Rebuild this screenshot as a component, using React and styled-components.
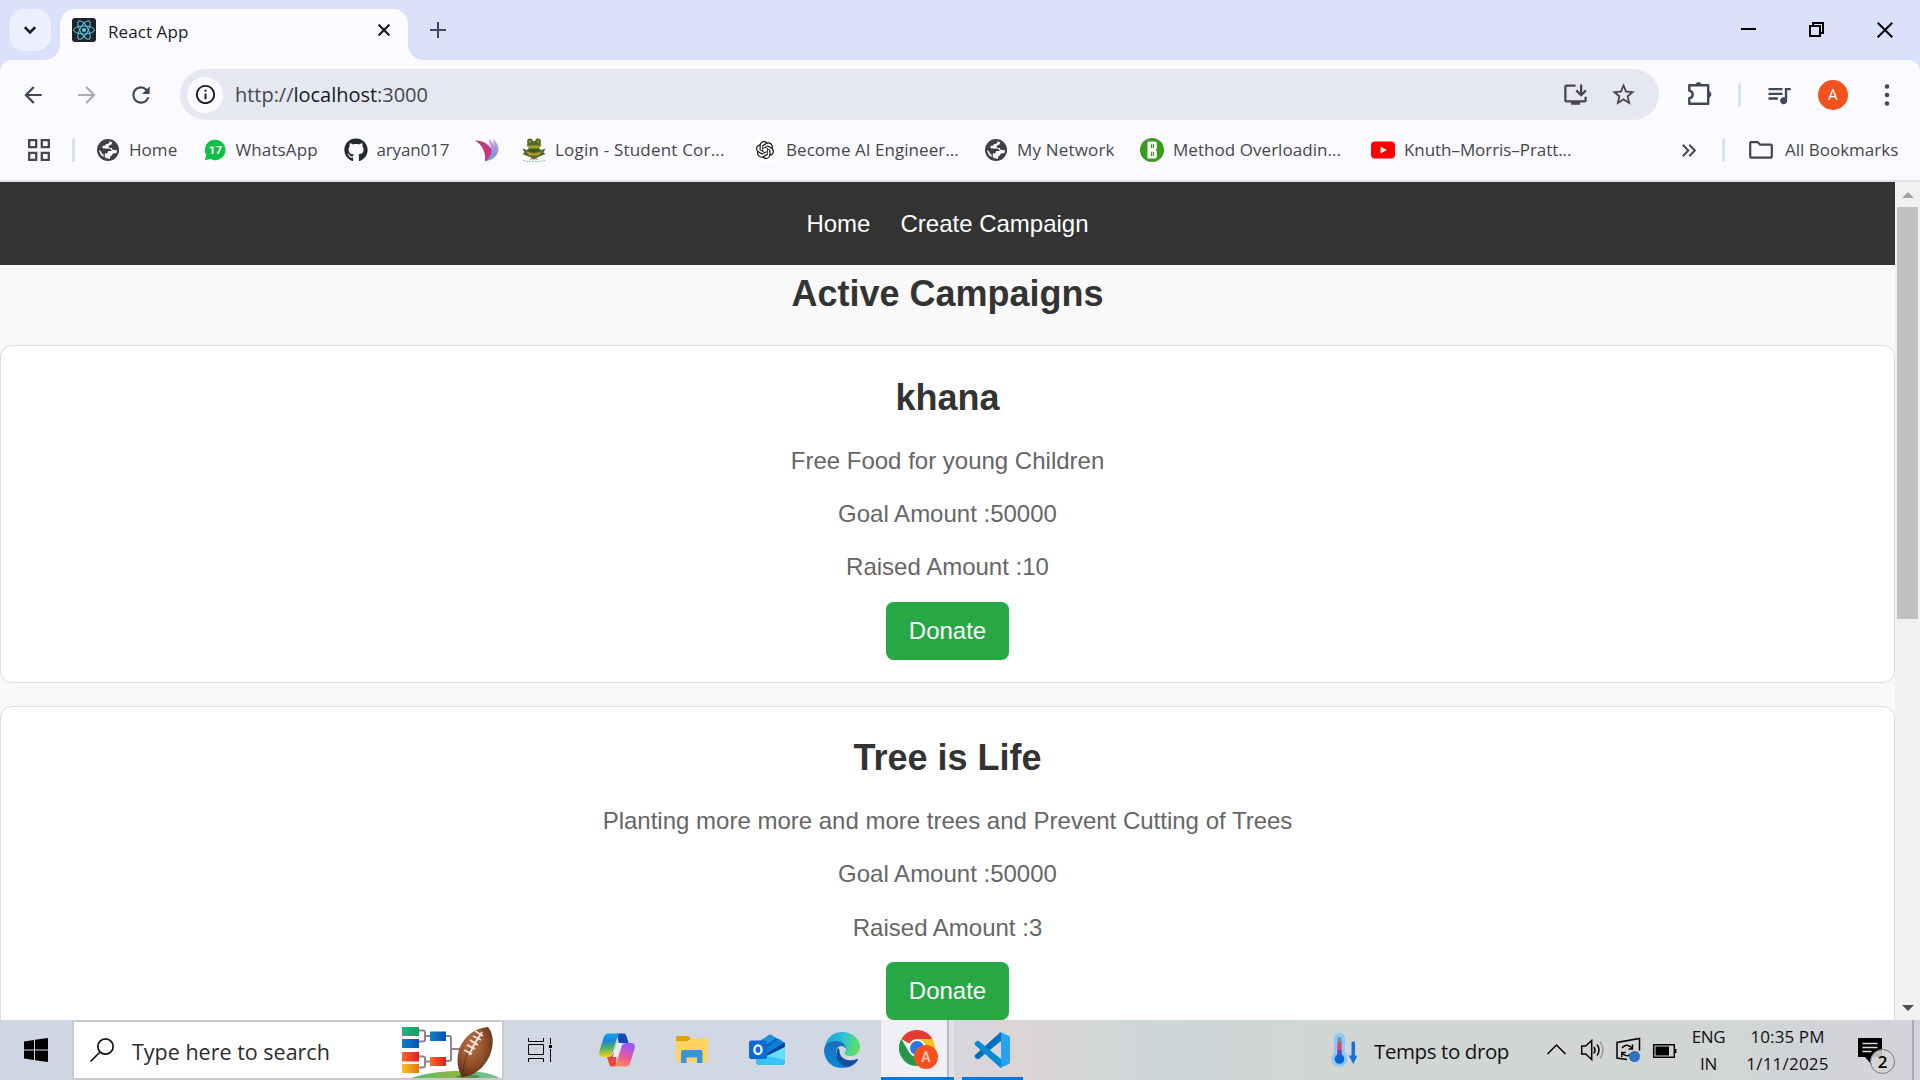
import React from "react";
import styled, { createGlobalStyle } from "styled-components";
import { FaGithub } from "react-icons/fa";
import { SiOpenai } from "react-icons/si";
import {
  MdArrowBack,
  MdArrowForward,
  MdRefresh,
  MdInfoOutline,
  MdStarBorder,
  MdQueueMusic,
  MdOutlineInstallDesktop,
} from "react-icons/md";

const GlobalStyle = createGlobalStyle`
  * { box-sizing: border-box; margin: 0; padding: 0; }
  html, body { overflow: hidden; background: #f9f9f9; }
  svg { display: block; flex: none; }
`;

const uiFont = `"Segoe UI", "Open Sans", "Noto Sans", sans-serif`;

const Screen = styled.div`
  width: 1920px;
  height: 1080px;
  display: flex;
  flex-direction: column;
  overflow: hidden;
  font-family: ${uiFont};
`;

const Label = styled.span`
  font-size: ${(p) => p.$size || 17}px;
  letter-spacing: ${(p) => p.$track || 0}px;
  color: ${(p) => p.$color || "#45474b"};
  line-height: 24px;
  white-space: pre;
`;

/* ---------- tab strip ---------- */
const TabStrip = styled.div`
  height: 60px;
  flex: none;
  display: flex;
  align-items: flex-end;
  padding-left: 9px;
  background: #dae1fa;
`;

const TabSearch = styled.div`
  width: 42px;
  height: 42px;
  margin: 0 9px 9px 0;
  border-radius: 15px;
  background: #ecf0fe;
  display: flex;
  align-items: center;
  justify-content: center;
`;

const Tab = styled.div`
  position: relative;
  width: 348px;
  height: 51px;
  padding: 0 18px 9px 12px;
  border-radius: 15px 15px 0 0;
  background: #fafaff;
  display: flex;
  align-items: center;
  gap: 12px;
  &::before,
  &::after {
    content: "";
    position: absolute;
    bottom: 0;
    width: 15px;
    height: 15px;
  }
  &::before {
    left: -15px;
    background: radial-gradient(circle at 0 0, transparent 14.5px, #fafaff 15px);
  }
  &::after {
    right: -15px;
    background: radial-gradient(circle at 100% 0, transparent 14.5px, #fafaff 15px);
  }
`;

const TabTitle = styled(Label)`
  flex: 1;
  padding-top: 3px;
`;

const NewTab = styled.div`
  width: 60px;
  height: 60px;
  display: flex;
  align-items: center;
  justify-content: center;
`;

const WindowControls = styled.div`
  margin-left: auto;
  height: 60px;
  display: flex;
  align-items: center;
  gap: 53px;
  padding-right: 27px;
`;

/* ---------- toolbar ---------- */
const ToolbarBack = styled.div`
  height: 122px;
  flex: none;
  background: #dae1fa;
`;

const ToolbarPanel = styled.div`
  height: 122px;
  border-radius: 12px 12px 0 0;
  border-bottom: 2px solid #e0e2ec;
  background: #fafaff;
`;

const Toolbar = styled.div`
  height: 69px;
  padding: 0 27px 0 20px;
  display: flex;
  align-items: center;
`;

const NavIcons = styled.div`
  width: 160px;
  display: flex;
  align-items: center;
  gap: 28px;
  padding-top: 1px;
  color: #3f4759;
`;

const Omnibox = styled.div`
  width: 1479px;
  height: 51px;
  padding: 0 22px 0 7px;
  border-radius: 26px;
  background: #e5e8f3;
  display: flex;
  align-items: center;
`;

const SiteInfo = styled.div`
  width: 36px;
  height: 36px;
  margin-right: 12px;
  border-radius: 50%;
  background: #fafaff;
  color: #1b1c20;
  display: flex;
  align-items: center;
  justify-content: center;
`;

const Url = styled(Label)`
  flex: 1;
  b {
    font-weight: 400;
    color: #17181c;
  }
`;

const OmniboxActions = styled.div`
  display: flex;
  align-items: center;
  gap: 21px;
  color: #45474b;
`;

const ToolbarActions = styled.div`
  flex: 1;
  display: flex;
  align-items: center;
  color: #3f4759;
  padding-left: 29px;
`;

const Divider = styled.div`
  width: 3px;
  height: 24px;
  flex: none;
  margin: 0 ${(p) => p.$gap || 0}px;
  border-radius: 2px;
  background: #d3e3fd;
`;

const Avatar = styled.div`
  width: 30px;
  height: 30px;
  margin-left: 25px;
  margin-right: 36px;
  border-radius: 50%;
  background: #f4511e;
  color: #fff;
  font: 400 15px/30px Roboto, sans-serif;
  text-align: center;
`;

/* ---------- bookmarks ---------- */
const BookmarksBar = styled.div`
  height: 42px;
  display: flex;
  align-items: center;
`;

const Bookmark = styled.div`
  width: ${(p) => p.$w}px;
  flex: none;
  display: flex;
  align-items: center;
`;

const IconSlot = styled.div`
  width: ${(p) => p.$w || 32}px;
  flex: none;
`;

const OpenAiTile = styled.div`
  width: 24px;
  height: 24px;
  border-radius: 6px;
  background: #fff;
  color: #111;
  display: flex;
  align-items: center;
  justify-content: center;
`;

/* ---------- page ---------- */
const Viewport = styled.div`
  height: 838px;
  flex: none;
  display: flex;
  overflow: hidden;
  background: #f9f9f9;
  font-family: Arial, "Liberation Sans", sans-serif;
`;

const Page = styled.div`
  width: 1895px;
  text-align: center;
  line-height: 1.6;
`;

const SiteNav = styled.nav`
  height: 83px;
  display: flex;
  align-items: center;
  justify-content: center;
  gap: 30px;
  background: #333;
  color: #fff;
  font-size: 24px;
  line-height: 27px;
`;

const Heading = styled.h2`
  font-size: 36px;
  line-height: 57.6px;
  color: #333;
  margin-bottom: ${(p) => p.$gap}px;
`;

const Card = styled.section`
  height: 337.9px;
  margin-bottom: 22.6px;
  padding: 22.5px;
  border: 1px solid #ddd;
  border-radius: 12px;
  background: #fff;
  display: flex;
  flex-direction: column;
  align-items: center;
`;

const Detail = styled.p`
  font-size: 24px;
  line-height: 38.4px;
  margin-bottom: 15px;
  color: #666;
`;

const Donate = styled.button`
  width: 123px;
  height: 58px;
  flex: none;
  padding-bottom: 1px;
  border: 0;
  border-radius: 7.5px;
  background: #28a745;
  color: #fff;
  font: 24px/27px Arial, "Liberation Sans", sans-serif;
`;

const Scrollbar = styled.div`
  width: 25px;
  padding: 10px 2px 9px;
  background: #f1f1f1;
  display: flex;
  flex-direction: column;
  align-items: center;
`;

const Thumb = styled.div`
  width: 21px;
  height: 412px;
  margin: 9px 0 auto;
  background: #c1c1c1;
`;

/* ---------- taskbar ---------- */
const Taskbar = styled.div`
  height: 60px;
  flex: none;
  display: flex;
  background: linear-gradient(90deg, #d0d7e4 0, #d1d8e3 860px, #d7d6dc 960px, #dbd5d5 1025px, #d2d6d7 1100px, #cfd6d7 1160px, #d1d6d5 1330px, #d1d6d5 1700px, #d2d3da 1920px);
`;

const TaskButton = styled.div`
  width: ${(p) => p.$w}px;
  height: 60px;
  flex: none;
  display: flex;
  align-items: center;
  justify-content: center;
`;

const SearchBox = styled.div`
  width: 432px;
  height: 60px;
  flex: none;
  padding-left: 15px;
  border: 2px solid #cacaca;
  background: #fff;
  display: flex;
  align-items: center;
`;

const SearchText = styled(Label)`
  width: 270px;
  margin-left: 17px;
  padding-top: 4px;
`;

const ActiveTask = styled.div`
  width: 73px;
  height: 60px;
  flex: none;
  margin-left: 5px;
  padding: 3px 0 0 18px;
  background: linear-gradient(90deg, #eff0f3 66px, #b7b9c0 66px, #b7b9c0 68px, #e0e2e8 68px);
  border-bottom: 3px solid #0078d7;
  display: flex;
  align-items: center;
`;

const OpenTask = styled.div`
  width: 61px;
  height: 60px;
  margin-left: 8px;
  padding: 3px 2px 0 0;
  flex: none;
  border-bottom: 3px solid #0078d7;
  display: flex;
  align-items: center;
  justify-content: center;
`;

const Weather = styled.div`
  width: 216px;
  margin-left: auto;
  display: flex;
  align-items: center;
  gap: 17px;
`;

const WeatherText = styled(Label)`
  padding-top: 2px;
`;

const Tray = styled.div`
  width: 142px;
  display: flex;
  align-items: center;
`;

const TwoLine = styled.div`
  width: ${(p) => p.$w}px;
  display: flex;
  flex-direction: column;
  align-items: center;
  justify-content: center;
  gap: 3px;
  padding-top: 1px;
`;

const Notifications = styled.div`
  position: relative;
  width: 65px;
  padding: 18px 0 0 11px;
`;

const Count = styled.div`
  position: absolute;
  left: 23px;
  top: 29px;
  width: 25px;
  height: 25px;
  border: 1px solid #777;
  border-radius: 50%;
  background: rgba(214, 214, 216, 0.88);
  color: #000;
  font: 600 17px/23px ${uiFont};
  text-align: center;
`;

const ShowDesktop = styled.div`
  width: 8px;
  border-left: 2px solid #a9abb1;
`;

/* ---------- drawings ---------- */
const ReactIcon = () => (
  <svg width="24" height="24" viewBox="0 0 24 24">
    <rect width="24" height="24" rx="3" fill="#20232a" />
    <g fill="none" stroke="#5ccfee" strokeWidth="1">
      <ellipse cx="12" cy="12" rx="10.4" ry="4" />
      <ellipse cx="12" cy="12" rx="10.4" ry="4" transform="rotate(60 12 12)" />
      <ellipse cx="12" cy="12" rx="10.4" ry="4" transform="rotate(120 12 12)" />
    </g>
    <circle cx="12" cy="12" r="2" fill="#5ccfee" />
  </svg>
);

const Globe = () => (
  <svg width="22" height="22" viewBox="0 0 22 22">
    <circle cx="11" cy="11" r="11" fill="#3f4245" />
    <path d="M12.500 2.300c.3 1.700-.8 2.700-2.900 2.800-.9 0-1.400.8-1.400 1.700H6.600c-.8 0-1.200.6-1.200 1.300 0 .8.500 1.300 1.300 1.300h4.800c2 0 3 1 3.200 2.600h-3.400c-.3 1.700-1 2.600-2.700 2.600H7.800v3.900a8.800 8.800 0 0 0 5.400 1.100c-.5-1.500.2-3 1.800-3.200.2-1.400.8-2.200 2.200-2.200h2.200a8.800 8.800 0 0 0 .3-3.200h-2.500c-1.400 0-2.200-.8-2.300-2.100h-1.700c-1 0-1.500-.6-1.500-1.400 0-.9.500-1.400 1.400-1.500 1.300-.1 2-.9 2.100-2.500a8.500 8.500 0 0 0-2.700-1.200ZM2.200 10.800a8.800 8.800 0 0 0 4.400 7.300v-2.700c-1.500-.2-2.200-1.100-2.300-2.600Z" fill="#fafaff" />
  </svg>
);

const WhatsApp = () => (
  <svg width="22" height="22" viewBox="0 0 22 22">
    <path d="M11.300 .8A10.200 10.200 0 1 1 6.500 20L.8 21.300l1.500-5.200A10.200 10.200 0 0 1 11.300.8Z" fill="#0fc143" />
    <text x="11.400" y="15.300" textAnchor="middle" fontFamily="Roboto, sans-serif" fontSize="11.500" fontWeight="700" fill="#fff">17</text>
  </svg>
);

const Swoosh = () => (
  <svg width="24" height="26" viewBox="0 0 24 26">
    <defs>
      <linearGradient id="sw1" x1="0" y1="0" x2="1" y2="1">
        <stop offset="0" stopColor="#a9417f" />
        <stop offset="1" stopColor="#d7307c" />
      </linearGradient>
      <linearGradient id="sw2" x1="0" y1="0" x2="0" y2="1">
        <stop offset="0" stopColor="#d9a3dc" />
        <stop offset="1" stopColor="#5f8fdc" />
      </linearGradient>
    </defs>
    <path d="M13.500 2c3 2 5 4 6 7l-1.500-7.500c4 4 6 8 5.500 12C22.500 18.500 18 23 9.500 24.500 13.500 20 16 16 16 11.500Z" fill="url(#sw2)" />
    <path d="M0 3.500c6 0 12 2 16 8 1.500 4-1 9-6 13 1-9-2.500-16.500-10-21Z" fill="url(#sw1)" />
  </svg>
);

const Frog = () => (
  <svg width="24" height="25" viewBox="0 0 24 25">
    <g fill="#4f6b25">
      <circle cx="8" cy="3.500" r="2.900" />
      <circle cx="16" cy="3.500" r="2.900" />
      <ellipse cx="12" cy="7" rx="7" ry="4" />
      <path d="M.5 10.500 5 12l2-2h10l2 2 4.500-1.500-2 4 2 1.500-6 2.500-5.500 2.500L6.500 18.500.5 16l2-1.500Z" />
    </g>
    <path d="M5.500 7.500h13l-2.500 2.700H8ZM4 13.500l8 2 8-2-3.500 4H7.500Z" fill="#b3992a" />
    <path d="M7.500 12h9v1.300h-9Z" fill="#334716" />
    <circle cx="8" cy="3.400" r="1" fill="#b9a83a" />
    <circle cx="16" cy="3.400" r="1" fill="#b9a83a" />
    <path d="M12 18v4M8.500 21.500l3.500-2 3.500 2" stroke="#8b5b34" fill="none" />
    <path d="M1 22.500l5 1 5-.3 6 .6 6-1.500" stroke="#9fbf9f" strokeDasharray="2 1" fill="none" />
  </svg>
);

const GreenB = () => (
  <svg width="24" height="24" viewBox="0 0 24 24">
    <circle cx="12" cy="12" r="12" fill="#3a9a1d" />
    <path d="M7.500 3.500h7.300c1.300 0 2 .8 2 2v4.400c0 1-.5 1.700-1.300 2 .8.300 1.300 1 1.300 2v4.700c0 1.200-.7 2-2 2H7.500Z" fill="#fff" />
    <path d="M11.500 6.300v3.800M11.500 13.700v4.200M13.400 6.300v3.800M13.400 13.700v4.200" stroke="#3a9a1d" strokeWidth="1.200" />
  </svg>
);

const YouTube = () => (
  <svg width="24" height="18" viewBox="0 0 24 18">
    <rect y=".5" width="24" height="17" rx="4" fill="#f00" />
    <path d="M9.600 5.400v7.200L15.800 9Z" fill="#fff" />
  </svg>
);

const Apps = () => (
  <svg width="22" height="22" viewBox="0 0 22 22" fill="none" stroke="#45474b" strokeWidth="2.300">
    <path d="M1.200 1.200h7v7h-7ZM13.800 1.200h7v7h-7ZM1.200 13.800h7v7h-7ZM13.800 13.800h7v7h-7Z" />
  </svg>
);

const Puzzle = () => (
  <svg width="25" height="26" viewBox="0 0 25 26" fill="none" stroke="#3f4759" strokeWidth="2.400" strokeLinejoin="round">
    <path d="M1.300 3.300h18.900v18.400H1.300v-5.500c2.300-.6 3.400-2 3.400-3.800 0-1.800-1.100-3.100-3.400-3.700Z" />
    <path d="M7.700 2.500a3 3 0 0 1 5.600 0ZM21 9.600a3 3 0 0 1 0 5.600Z" fill="#3f4759" strokeWidth="1" />
  </svg>
);

const StartLogo = () => (
  <svg width="24" height="24" viewBox="0 0 24 24">
    <path d="M0 3.400 10 2v9.500H0ZM11 1.800 24 0v11.500H11ZM0 12.500h10V22L0 20.600ZM11 12.500h13V24l-13-1.800Z" />
  </svg>
);

const Football = () => (
  <svg width="100" height="56" viewBox="402 1022 100 56">
    <defs>
      <radialGradient id="ball" cx=".4" cy=".35" r=".7">
        <stop offset="0" stopColor="#bb7243" />
        <stop offset=".55" stopColor="#93512a" />
        <stop offset="1" stopColor="#592a18" />
      </radialGradient>
      <linearGradient id="hill">
        <stop offset="0" stopColor="#55b97e" />
        <stop offset=".5" stopColor="#8bb944" />
        <stop offset=".7" stopColor="#6fbe83" />
        <stop offset="1" stopColor="#74c48f" />
      </linearGradient>
      <linearGradient id="fb1"><stop stopColor="#12b886" /><stop offset="1" stopColor="#14a35b" /></linearGradient>
      <linearGradient id="fb2"><stop stopColor="#0a84c6" /><stop offset="1" stopColor="#0a50b8" /></linearGradient>
      <linearGradient id="fb3"><stop stopColor="#fa6b28" /><stop offset="1" stopColor="#e51b23" /></linearGradient>
      <linearGradient id="fb4"><stop stopColor="#fbbf24" /><stop offset="1" stopColor="#e07b10" /></linearGradient>
    </defs>
    <path d="M408 1079c14-5 32-8 52-8 18 0 34 2 41 8Z" fill="url(#hill)" />
    <g fill="none" stroke="#8f8299" strokeWidth="2">
      <path d="M419 1030.500h4q2 0 2 2v7q0 2-2 2h-4M425 1036h6M419 1056.500h4q2 0 2 2v7q0 2-2 2h-4M425 1061.500h6M446 1036h3q2 0 2 2v21q0 2-2 2h-3M451 1049h9" />
    </g>
    <rect x="402" y="1027" width="17" height="9" fill="url(#fb1)" />
    <rect x="402" y="1039" width="17" height="9" fill="url(#fb2)" />
    <rect x="402" y="1052" width="17" height="9.500" fill="url(#fb3)" />
    <rect x="402" y="1064" width="17" height="9" fill="url(#fb4)" />
    <rect x="430" y="1031.500" width="16" height="9.500" fill="url(#fb2)" />
    <rect x="430" y="1057" width="16" height="9" fill="url(#fb3)" />
    <ellipse cx="468" cy="1076.500" rx="12" ry="2" fill="#4e6f2c" opacity=".6" />
    <path d="M488 1027c5 6 6 15 3 25-4 13-15 24-29 25-5-8-6-20-2-30 5-11 15-19 28-20Z" fill="url(#ball)" />
    <path d="M463 1076c0-10 3-20 7-28" stroke="#5b2c19" strokeWidth=".8" fill="none" />
    <path d="M482 1032c-5 7-9 14-13 23M475 1031l8 5M473 1036l8 4M470 1040l8 5M467 1045l8 4M464 1050l8 4" stroke="#f3e9e2" strokeWidth="1.900" fill="none" />
  </svg>
);

const TaskView = () => (
  <svg width="24" height="24" viewBox="0 0 24 24" fill="none" stroke="#000" strokeWidth="1">
    <path d="M.5 0v3.500h15V0M.5 6.500h15v10H.5ZM.5 24v-3.500h15V24M22.500 0v6M22.500 11v13" />
    <rect x="21" y="7" width="3" height="3" fill="#000" stroke="none" />
  </svg>
);

const Copilot = () => (
  <svg width="36" height="34" viewBox="0 0 36 34">
    <defs>
      <linearGradient id="cp1" x1="0" y1="0" x2=".1" y2="1">
        <stop offset="0" stopColor="#11a4ea" />
        <stop offset=".35" stopColor="#1785dd" />
        <stop offset=".65" stopColor="#58ae62" />
        <stop offset="1" stopColor="#efd312" />
      </linearGradient>
      <linearGradient id="cp2" x1=".3" y1="0" x2="0" y2="1">
        <stop offset="0" stopColor="#9a58f0" />
        <stop offset=".5" stopColor="#ee5795" />
        <stop offset="1" stopColor="#ff9a52" />
      </linearGradient>
    </defs>
    <path d="M18 .5h6.500c1.500 0 2.300.8 2.800 2.300l2.400 7.200h-4c-3 0-4.200 1-5.200 4Z" fill="#1847b5" />
    <path d="M9 .5h13c-3 1-4 4-5 8l-3.500 11c-1 3-2.700 4.500-5.500 4.500H4c-3.500 0-4.500-2.200-3.500-6L4.500 5c1-3 2-4.500 4.500-4.500Z" fill="url(#cp1)" />
    <path d="M17 33.500h-4c-1.500 0-2.200-.8-2.700-2.300L8 24c4-.1 5.500-1.500 6.500-4.500l3 5Z" fill="#e8453c" />
    <path d="M18.500 10h5l-5.500 14h-4.500Z" fill="#e9ecf4" />
    <path d="M27 33.500H14c3-1 4-4 5-8l3.300-11c.9-3 2.700-4.500 5.700-4.500h4.300c3 0 4.200 2 3.300 5.500L31.500 29c-1 3-2 4.500-4.500 4.500Z" fill="url(#cp2)" />
  </svg>
);

const Explorer = () => (
  <svg width="32" height="28" viewBox="0 0 32 28">
    <path d="M0 2Q0 0 2 0h10l3 3-2 3H0Z" fill="#e0a008" />
    <path d="M0 5h12l3-2.500h15q2 0 2 2V24q0 2-2 2H2q-2 0-2-2Z" fill="#fed35f" />
    <path d="M5 27V16.500Q5 14 7.500 14h16.500q2.500 0 2.500 2.500V27H21v-5.500H10.500V27Z" fill="#3a94dc" />
  </svg>
);

const Outlook = () => (
  <svg width="36" height="32" viewBox="0 0 36 32">
    <path d="M7 10 21 0.500 36 9v18q0 4-4 4H11q-4 0-4-4Z" fill="#0a63be" />
    <path d="M9 8 21 .5 27 4 12 15Z" fill="#1e90df" />
    <path d="m15 15 15-10 5 3.500L18 20Z" fill="#0a7fdc" />
    <path d="m18 19.500 17.500-11V15L22 22Z" fill="#073e91" />
    <path d="M36 13v14q0 4-4 4H11q-4 0-4-4v-3l11-2Z" fill="#37c6f4" />
    <path d="M36 13v13L18 22Z" fill="#68dff8" />
    <rect y="6.500" width="18" height="18.500" rx="2" fill="#0c6bd0" />
    <ellipse cx="9" cy="15.700" rx="3.600" ry="4.300" fill="none" stroke="#fff" strokeWidth="2.300" />
  </svg>
);

const Edge = () => (
  <svg width="36" height="36" viewBox="0 0 36 36">
    <defs>
      <linearGradient id="ed1" x1="0" y1=".3" x2="1" y2=".5">
        <stop offset="0" stopColor="#1a9fe0" />
        <stop offset=".5" stopColor="#2fc2d7" />
        <stop offset="1" stopColor="#62e158" />
      </linearGradient>
      <linearGradient id="ed2" x1="0" y1="0" x2="0" y2="1">
        <stop offset="0" stopColor="#1c6fb5" />
        <stop offset="1" stopColor="#0a87dc" />
      </linearGradient>
    </defs>
    <path d="M1 14C3 5.500 9.500 0 18 0c10.500 0 18 7 18 15 0 5-3.500 9-9 9-4 0-6.500-1.500-6.500-3 0-1 1.500-1.500 1.500-4 0-3.500-4-7-9.500-7C7 10 3 11.500 1 14Z" fill="url(#ed1)" />
    <path d="M0 18C.5 12 5.500 9 12 9c6 0 10 3.500 10 8-1-2-3-3-4.500-3-4 0-6 4-5 9 1 6 5.500 11 11 12-14 4-23.500-6-23.500-17Z" fill="url(#ed2)" />
    <path d="M14 15.500c-4 8-.5 17 8.500 20 5-1 9-3.500 11.500-7.500.5-1-.3-1.300-1-1-8 3.500-18 0-17.500-9Z" fill="#10509f" />
  </svg>
);

const Chrome = () => (
  <svg width="40" height="40" viewBox="0 0 40 40">
    <path d="M18 18 2.400 9A18 18 0 0 1 33.600 9H18Z" fill="#e33b2e" />
    <path d="M18 18V9h15.600A18 18 0 0 1 18 36l8-13.500Z" fill="#fcc31e" />
    <path d="M18 18l-7.800 4.500L2.400 9A18 18 0 0 0 18 36l7.800-13.500Z" fill="#259746" />
    <circle cx="18" cy="18" r="9" fill="#fff" />
    <circle cx="18" cy="18" r="7" fill="#2d72e8" />
    <circle cx="27" cy="27" r="12" fill="#f4511e" />
    <text x="27" y="32" textAnchor="middle" fontFamily="Roboto, sans-serif" fontSize="14" fontWeight="500" fill="#ffd0bf">A</text>
  </svg>
);

const VsCode = () => (
  <svg width="36" height="36" viewBox="0 0 36 36">
    <path d="M1 25.500 3 27q1 .6 2-.2L27 9V.5q-1 0-2 1L1 23q-1 1.300 0 2.500Z" fill="#0170b8" />
    <path d="M1 10.500 3 9q1-.6 2 .2L27 27v8.500q-1 0-2-1L1 13Q0 11.700 1 10.500Z" fill="#058bd6" />
    <path d="M26.500 0 35 4q1 .5 1 1.700v24.600q0 1.200-1 1.700l-8.500 4q-1 0-1.500-.7 2 .2 2-1.800V2.500q0-2-2-1.800.5-.7 1.500-.7Z" fill="#26a3f1" />
  </svg>
);

const Thermometer = () => (
  <svg width="26" height="38" viewBox="0 0 26 38">
    <path d="M3 7.500a5.500 5.500 0 0 1 11 0V22a8 8 0 1 1-11 0Z" fill="#8cc8fa" />
    <rect x="6.500" y="6" width="4" height="20" rx="2" fill="#7590aa" />
    <rect x="6.500" y="11" width="4" height="17" fill="#d8466e" />
    <rect x="6.500" y="19" width="4" height="9" fill="#5054c0" />
    <circle cx="8.500" cy="28" r="4.800" fill="#0b63d8" />
    <path d="M20.500 12q0-1.700 1.700-1.700T24 12v12.500h2.500L22.200 33l-4.500-8.500h2.800Z" fill="#1273dc" />
  </svg>
);

const TrayIcons = () => (
  <svg width="130" height="30" viewBox="1547 1035 130 30" fill="none" stroke="#000" strokeWidth="1.500">
    <path d="m1547.500 1054 9-9 9 9" />
    <path d="M1581.700 1046h4l6-5.500v19l-6-5.500h-4ZM1594 1047q2 3 0 6.500M1597 1044.500q4 5.500 0 11" />
    <path d="M1600 1041.500q6 8 0 17" stroke="#999" />
    <path d="M1627 1059.500l-10-1.500v-15.500l22.500-4v12" />
    <path d="M1622 1048q4-5 9-1l1.500 1.500m0-4v4.500h-4M1632 1053q-4 5-9 1l-1.200-1.500m0 4.500v-4.500h4" />
    <circle cx="1634.500" cy="1056.500" r="5.500" fill="#2c72bf" stroke="none" />
    <path d="M1653.700 1044.700h20.600v12.600h-20.600ZM1675.700 1049v4" />
    <rect x="1655.500" y="1046.500" width="13.500" height="9" fill="#000" stroke="none" />
  </svg>
);

const bookmarks = [
  { icon: <Globe />, text: "Home", w: 107, track: 0.05 },
  { icon: <WhatsApp />, text: "WhatsApp", w: 140, slot: 31.5, track: 0.12 },
  { icon: <FaGithub size={24} color="#24292f" />, text: "aryan017", w: 131, slot: 32.5, track: -0.15 },
  { icon: <Swoosh />, text: "", w: 47 },
  { icon: <Frog />, text: "Login - Student Cor...", w: 231, slot: 33, track: 0.2 },
  { icon: <OpenAiTile><SiOpenai size={18} /></OpenAiTile>, text: "Become AI Engineer...", w: 232, slot: 33, track: 0.05 },
  { icon: <Globe />, text: "My Network", w: 155, track: 0.18 },
  { icon: <GreenB />, text: "Method Overloadin...", w: 231, slot: 33, track: 0.05 },
  { icon: <YouTube />, text: "Knuth–Morris–Pratt...", w: 311, slot: 33, track: -0.06 },
];

const campaigns = [
  { title: "khana", text: "Free Food for young Children", goal: 50000, raised: 10 },
  { title: "Tree is Life", text: "Planting more more and more trees and Prevent Cutting of Trees", goal: 50000, raised: 3 },
];

export default function App() {
  return (
    <Screen>
      <GlobalStyle />
      <TabStrip>
        <TabSearch>
          <svg width="12" height="8" viewBox="0 0 12 8" fill="none" stroke="#1b1c20" strokeWidth="2.600">
            <path d="m.8 1.200 5.200 5.200 5.200-5.200" />
          </svg>
        </TabSearch>
        <Tab>
          <ReactIcon />
          <TabTitle $track={0.08} $color="#1f2024">React App</TabTitle>
          <svg width="12" height="12" viewBox="0 0 12 12" stroke="#1b1c20" strokeWidth="2.200">
            <path d="m.6.6 10.800 10.800M11.400.6.6 11.400" />
          </svg>
        </Tab>
        <NewTab>
          <svg width="16" height="16" viewBox="0 0 16 16" stroke="#3f4759" strokeWidth="2">
            <path d="M8 0v16M0 8h16" />
          </svg>
        </NewTab>
        <WindowControls>
          <svg width="15" height="16" viewBox="0 0 15 16"><path d="M0 6h15v2H0Z" /></svg>
          <svg width="15" height="16" viewBox="0 0 15 16" fill="none" stroke="#000" strokeWidth="2">
            <path d="M1 4h10v10H1ZM4 4V1h10v10h-3" />
          </svg>
          <svg width="16" height="16" viewBox="0 0 16 16" stroke="#000" strokeWidth="2">
            <path d="m.7.700 14.600 14.600M15.300.700.700 15.300" />
          </svg>
        </WindowControls>
      </TabStrip>

      <ToolbarBack>
        <ToolbarPanel>
          <Toolbar>
            <NavIcons>
              <MdArrowBack size={26} />
              <MdArrowForward size={26} color="#a9abb1" />
              <MdRefresh size={26} />
            </NavIcons>
            <Omnibox>
              <SiteInfo><MdInfoOutline size={23} /></SiteInfo>
              <Url $size={20} $track={-0.03}>http://<b>localhost</b>:3000</Url>
              <OmniboxActions>
                <MdOutlineInstallDesktop size={27} />
                <MdStarBorder size={27} />
              </OmniboxActions>
            </Omnibox>
            <ToolbarActions>
              <Puzzle />
              <Divider $gap={24.5} />
              <MdQueueMusic size={28} />
              <Avatar>A</Avatar>
              <svg width="6" height="22" viewBox="0 0 6 22" fill="#3f4759">
                <circle cx="3" cy="2.500" r="2.300" />
                <circle cx="3" cy="11" r="2.300" />
                <circle cx="3" cy="19.500" r="2.300" />
              </svg>
            </ToolbarActions>
          </Toolbar>
          <BookmarksBar>
            <IconSlot $w={28} />
            <IconSlot $w={44}><Apps /></IconSlot>
            <Divider />
            <IconSlot $w={22} />
            {bookmarks.map((b, i) => (
              <Bookmark key={i} $w={b.w}>
                <IconSlot $w={b.slot}>{b.icon}</IconSlot>
                <Label $track={b.track}>{b.text}</Label>
              </Bookmark>
            ))}
            <IconSlot $w={40}>
              <svg width="14" height="13" viewBox="0 0 14 13" fill="none" stroke="#45474b" strokeWidth="2">
                <path d="M.8.800 6.300 6.500.8 12.200M7.300.800l5.500 5.700-5.500 5.700" />
              </svg>
            </IconSlot>
            <Divider />
            <IconSlot $w={24} />
            <IconSlot $w={36}>
              <svg width="24" height="18" viewBox="0 0 24 18" fill="none" stroke="#45474b" strokeWidth="2.200" strokeLinejoin="round">
                <path d="M1.200 2.200q0-1 1-1h6.600l2.400 2.500h10.600q1 0 1 1v11q0 1-1 1H2.200q-1 0-1-1Z" />
              </svg>
            </IconSlot>
            <Label>All Bookmarks</Label>
          </BookmarksBar>
        </ToolbarPanel>
      </ToolbarBack>

      <Viewport>
        <Page>
          <SiteNav>
            <span>Home</span>
            <span>Create Campaign</span>
          </SiteNav>
          <Heading $gap={22.5}>Active Campaigns</Heading>
          {campaigns.map((c) => (
            <Card key={c.title}>
              <Heading $gap={15.38}>{c.title}</Heading>
              <Detail>{c.text}</Detail>
              <Detail>Goal Amount :{c.goal}</Detail>
              <Detail>Raised Amount :{c.raised}</Detail>
              <Donate>Donate</Donate>
            </Card>
          ))}
        </Page>
        <Scrollbar>
          <svg width="12" height="6" viewBox="0 0 12 6"><path d="M0 6 6 0l6 6Z" fill="#a3a3a3" /></svg>
          <Thumb />
          <svg width="12" height="6" viewBox="0 0 12 6"><path d="M0 0h12L6 6Z" fill="#505050" /></svg>
        </Scrollbar>
      </Viewport>

      <Taskbar>
        <TaskButton $w={72}><StartLogo /></TaskButton>
        <SearchBox>
          <svg width="26" height="26" viewBox="0 0 26 26" fill="none" stroke="#111" strokeWidth="1.700">
            <circle cx="16.500" cy="9.500" r="7.700" />
            <path d="M11 15 1.500 24.500" />
          </svg>
          <SearchText $size={21.5} $color="#2b2b2b">Type here to search</SearchText>
          <Football />
        </SearchBox>
        <TaskButton $w={72}><TaskView /></TaskButton>
        <TaskButton $w={82}><Copilot /></TaskButton>
        <TaskButton $w={68}><Explorer /></TaskButton>
        <TaskButton $w={82}><Outlook /></TaskButton>
        <TaskButton $w={68}><Edge /></TaskButton>
        <ActiveTask><Chrome /></ActiveTask>
        <OpenTask><VsCode /></OpenTask>
        <Weather>
          <Thermometer />
          <WeatherText $size={20.5} $color="#111" $track={-0.4}>Temps to drop</WeatherText>
        </Weather>
        <Tray><TrayIcons /></Tray>
        <TwoLine $w={39}>
          <Label $color="#111" $track={-0.3}>ENG</Label>
          <Label $color="#111" $track={-0.3}>IN</Label>
        </TwoLine>
        <TwoLine $w={119}>
          <Label $color="#111" $track={0.12}>10:35 PM</Label>
          <Label $color="#111" $track={0.22}>1/11/2025</Label>
        </TwoLine>
        <Notifications>
          <svg width="24" height="26" viewBox="0 0 24 26">
            <path d="M0 0h24v19H13v7l-6-7H0Z" />
            <path d="M4.500 5.500h15M4.500 9.500h15M4.500 13.500h9" stroke="#ddd" strokeWidth="1.400" />
          </svg>
          <Count>2</Count>
        </Notifications>
        <ShowDesktop />
      </Taskbar>
    </Screen>
  );
}
